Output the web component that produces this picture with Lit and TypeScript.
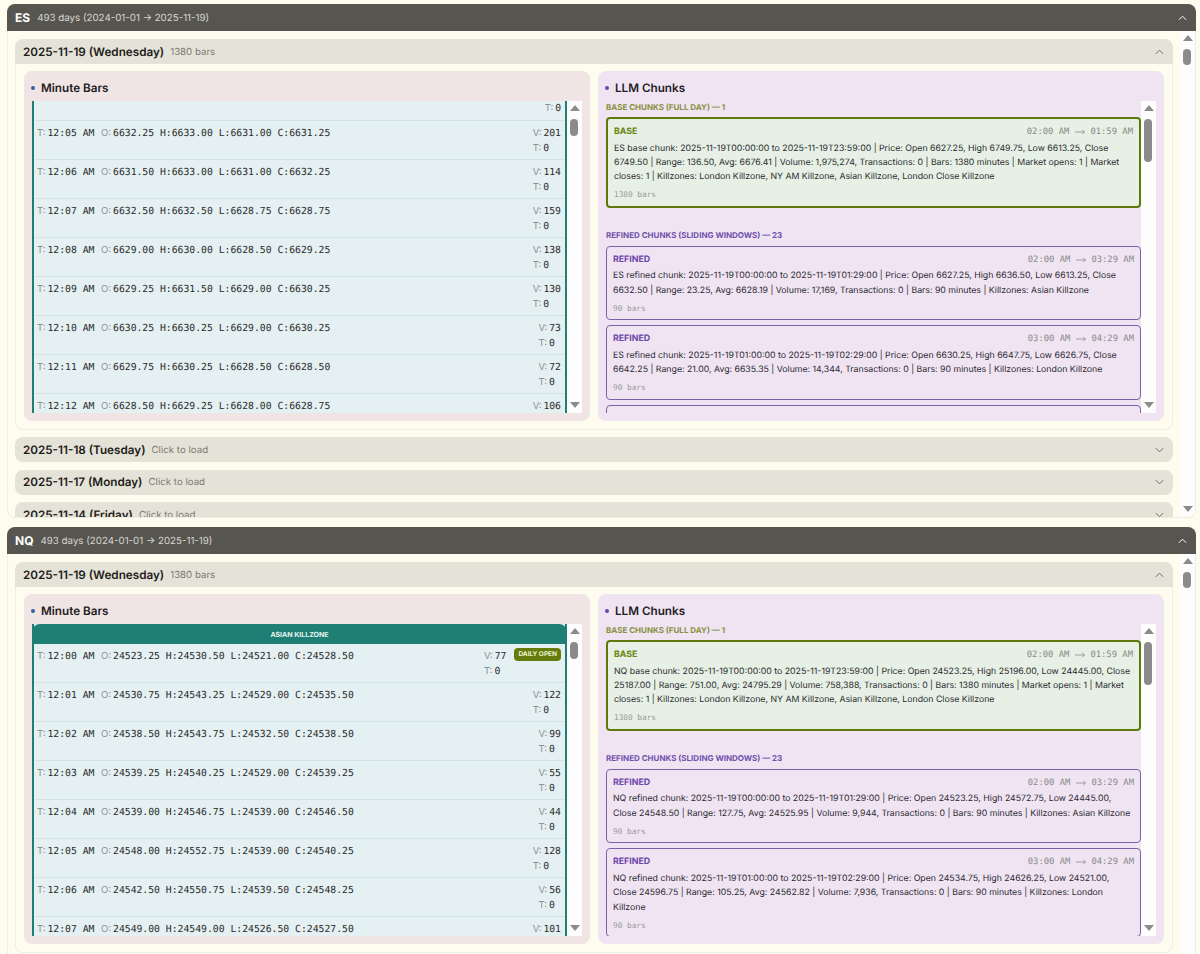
import { LitElement, html, css } from "lit";
import { customElement, property } from "lit/decorators.js";

type Bar = [string, string, string, string, string, string, string?];
const ES: Bar[] = [
  ["12:05 AM", "6632.25", "6633.00", "6631.00", "6631.25", "201"],
  ["12:06 AM", "6631.50", "6633.00", "6631.00", "6632.25", "114"],
  ["12:07 AM", "6632.50", "6632.50", "6628.75", "6628.75", "159"],
  ["12:08 AM", "6629.00", "6630.00", "6628.50", "6629.25", "138"],
  ["12:09 AM", "6629.25", "6631.50", "6629.00", "6630.25", "130"],
  ["12:10 AM", "6630.25", "6630.25", "6629.00", "6630.25", "73"],
  ["12:11 AM", "6629.75", "6630.25", "6628.50", "6628.50", "72"],
  ["12:12 AM", "6628.50", "6629.25", "6628.00", "6628.75", "106"],
];
const NQ: Bar[] = [
  ["12:00 AM", "24523.25", "24530.50", "24521.00", "24528.50", "77", "DAILY OPEN"],
  ["12:01 AM", "24530.75", "24543.25", "24529.00", "24535.50", "122"],
  ["12:02 AM", "24538.50", "24543.75", "24532.50", "24538.50", "99"],
  ["12:03 AM", "24539.25", "24540.25", "24529.00", "24539.25", "55"],
  ["12:04 AM", "24539.00", "24546.75", "24539.00", "24546.50", "44"],
  ["12:05 AM", "24548.00", "24552.75", "24539.00", "24540.25", "128"],
  ["12:06 AM", "24542.50", "24550.75", "24539.50", "24548.25", "56"],
  ["12:07 AM", "24549.00", "24549.00", "24526.50", "24527.50", "101"],
];

const KZ = "Killzones: London Killzone, NY AM Killzone, Asian Killzone, London Close Killzone";
interface Refined { from: string; to: string; text: string }
interface Sym {
  name: string; bars: Bar[]; killzone?: string; partial: boolean;
  base: string; refined: Refined[]; days: string[];
}
const SYMS: Sym[] = [
  {
    name: "ES", bars: ES, partial: true,
    base: `ES base chunk: 2025-11-19T00:00:00 to 2025-11-19T23:59:00 | Price: Open 6627.25, High 6749.75, Low 6613.25, Close 6749.50 | Range: 136.50, Avg: 6676.41 | Volume: 1,975,274, Transactions: 0 | Bars: 1380 minutes | Market opens: 1 | Market closes: 1 | ${KZ}`,
    refined: [
      { from: "02:00 AM", to: "03:29 AM", text: "ES refined chunk: 2025-11-19T00:00:00 to 2025-11-19T01:29:00 | Price: Open 6627.25, High 6636.50, Low 6613.25, Close 6632.50 | Range: 23.25, Avg: 6628.19 | Volume: 17,169, Transactions: 0 | Bars: 90 minutes | Killzones: Asian Killzone" },
      { from: "03:00 AM", to: "04:29 AM", text: "ES refined chunk: 2025-11-19T01:00:00 to 2025-11-19T02:29:00 | Price: Open 6630.25, High 6647.75, Low 6626.75, Close 6642.25 | Range: 21.00, Avg: 6635.35 | Volume: 14,344, Transactions: 0 | Bars: 90 minutes | Killzones: London Killzone" },
    ],
    days: ["2025-11-18 (Tuesday)", "2025-11-17 (Monday)", "2025-11-14 (Friday)"],
  },
  {
    name: "NQ", bars: NQ, killzone: "ASIAN KILLZONE", partial: false,
    base: `NQ base chunk: 2025-11-19T00:00:00 to 2025-11-19T23:59:00 | Price: Open 24523.25, High 25196.00, Low 24445.00, Close 25187.00 | Range: 751.00, Avg: 24795.29 | Volume: 758,388, Transactions: 0 | Bars: 1380 minutes | Market opens: 1 | Market closes: 1 | ${KZ}`,
    refined: [
      { from: "02:00 AM", to: "03:29 AM", text: "NQ refined chunk: 2025-11-19T00:00:00 to 2025-11-19T01:29:00 | Price: Open 24523.25, High 24572.75, Low 24445.00, Close 24548.50 | Range: 127.75, Avg: 24525.95 | Volume: 9,944, Transactions: 0 | Bars: 90 minutes | Killzones: Asian Killzone" },
      { from: "03:00 AM", to: "04:29 AM", text: "NQ refined chunk: 2025-11-19T01:00:00 to 2025-11-19T02:29:00 | Price: Open 24534.75, High 24626.25, Low 24521.00, Close 24596.75 | Range: 105.25, Avg: 24562.82 | Volume: 7,936, Transactions: 0 | Bars: 90 minutes | Killzones: London Killzone" },
    ],
    days: [],
  },
];

@customElement("fake-scrollbar")
class FakeScrollbar extends LitElement {
  @property({ type: Number }) thumbTop = 12;
  @property({ type: Number }) thumbHeight = 16;
  static styles = css`
    :host { display: flex; flex: none; width: 15px; background: #fdfdfd; flex-direction: column; align-items: center; position: relative; }
    .up, .down { width: 0; height: 0; border-left: 5px solid transparent; border-right: 5px solid transparent; position: absolute; left: 2.5px; }
    .up { top: 4px; border-bottom: 6px solid #8b8b8b; }
    .down { bottom: 5px; border-top: 6px solid #8b8b8b; }
    .thumb { position: absolute; left: 3px; width: 8px; border-radius: 4px; background: #8b8b8b; }
  `;
  render() {
    return html`<div class="up"></div>
      <div class="thumb" style="top:${this.thumbTop}px;height:${this.thumbHeight}px"></div>
      <div class="down"></div>`;
  }
}

const chevUp = html`<svg viewBox="0 0 10 6" width="9" height="6" fill="none" stroke="currentColor" stroke-width="1.1"><polyline points="1,5 5,1 9,5"></polyline></svg>`;
const chevDown = html`<svg viewBox="0 0 10 6" width="9" height="6" fill="none" stroke="currentColor" stroke-width="1.1"><polyline points="1,1 5,5 9,1"></polyline></svg>`;
const timeArrow = html`<svg class="tarrow" viewBox="0 0 10 6" width="10" height="6" fill="none" stroke="currentColor" stroke-width="0.8"><path d="M0 3H9.5M7.2 1L9.5 3L7.2 5"></path></svg>`;

@customElement("app-root")
export class AppRoot extends LitElement {
  static styles = css`
    :host { display: block; height: 954px; overflow: hidden; background: #fefcef; font-family: Inter, "Liberation Sans", sans-serif; text-rendering: geometricPrecision; }
    * { box-sizing: border-box; }
    .page { display: flex; flex-direction: column; gap: 9px; padding: 4px 4px 0 7px; }
    .section { flex: none; height: 514px; display: flex; flex-direction: column; }
    .sec-head { flex: none; height: 27px; background: #57554f; border-radius: 8px 8px 0 0; color: #fff; display: flex; align-items: center; padding: 0 9px 0 8px; }
    .sec-name { font-weight: 700; font-size: 12px; }
    .sec-sub { font-size: 9.75px; color: #d8d6cf; margin-left: 7px; flex: 1; padding-top: 1px; }
    .sec-body { flex: 1; min-height: 0; display: flex; border: 1px solid #f0eee2; border-top: 0; border-radius: 0 0 8px 8px; overflow: hidden; margin-right: 0; }
    .sec-scroll { flex: 1; min-width: 0; overflow: hidden; padding: 8px 7px 0 7px; display: flex; flex-direction: column; gap: 7.4px; }
    .day { flex: none; }
    .day-head { height: 25px; background: #e5e3d8; border-radius: 8px; display: flex; align-items: center; padding: 0 9px 0 8px; color: #6b6a62; }
    .day.open .day-head { border-radius: 8px 8px 0 0; }
    .day-title { font-size: 11.7px; font-weight: 600; color: #1d1c18; }
    .day-sub { font-size: 9.7px; color: #7d7c74; margin-left: 6px; flex: 1; padding-top: 1px; }
    .day-body { height: 366px; border: 1px solid #efede1; border-top: 0; border-radius: 0 0 8px 8px; padding: 7px 8px 0; display: grid; grid-template-columns: 1fr 1fr; gap: 8px; align-items: start; }
    .panel { height: 350px; border-radius: 8px; padding: 0 8px 8px; display: flex; flex-direction: column; }
    .panel.min { background: #f1e4e4; }
    .panel.llm { background: #f0e4f3; }
    .panel-title { flex: none; height: 30px; display: flex; align-items: center; gap: 5px; font-size: 11.7px; font-weight: 600; color: #1d1c22; padding-top: 3px; }
    .dot { width: 4px; height: 4px; border-radius: 50%; margin-left: -1px; margin-right: 1px; }
    .min .dot { background: #2f5fa8; }
    .llm .dot { background: #6b46a8; }
    .scroller { flex: 1; min-height: 0; display: flex; overflow: hidden; }
    .view { flex: 1; min-width: 0; overflow: hidden; }
    .bars { background: #e4f0f1; border-left: 2px solid #1f7f74; border-right: 2px solid #1f7f74; height: 100%; overflow: hidden; }
    .kz { height: 20px; background: #1f7f74; margin: 0 -2px; padding: 0 2px; border-radius: 8px 8px 0 0; color: #e8f4f0; font-size: 7px; font-weight: 700; display: flex; align-items: center; justify-content: center; }
    .bar { height: 39px; display: flex; align-items: flex-start; padding: 5px 4px 0 3px; border-bottom: 1px solid #d6e3e5; font-family: "DejaVu Sans Mono", monospace; font-size: 9.75px; color: #2a2a2a; line-height: 15px; }
    .bar.partial { height: 20px; padding-top: 0; justify-content: flex-end; }
    .lbl { font-family: Inter, "Liberation Sans", sans-serif; color: #8b9294; font-size: 9.5px; margin-right: 2px; }
    .ohlc { flex: 1; display: flex; white-space: pre; }
    .tcol { width: 64px; }
    .vt { display: flex; flex-direction: column; }
    .badge { margin-left: 8px; margin-top: -1.5px; height: 13px; padding: 0 4px; border-radius: 4px; background: #657b0c; color: #eef2d8; font: 700 6.5px/13px Inter, "Liberation Sans", sans-serif; white-space: nowrap; }
    .chunks { height: 100%; overflow: hidden; }
    .grp { font-size: 8px; font-weight: 700; text-transform: uppercase; height: 16px; display: flex; align-items: flex-start; line-height: 12px; }
    .grp.base { color: #86903f; }
    .grp.ref { color: #7150ac; margin-top: 21px; height: 17px; line-height: 12px; }
    .card { border-radius: 4px; padding: 7px 6px 5.5px; font-size: 8.75px; line-height: 14.4px; color: #2b2a30; }
    .card.base { background: #e6f0e4; border: 2px solid #5f7a0a; }
    .card.ref { background: #f0e4f3; border: 1px solid #7b63a8; margin-bottom: 5.4px; }
    .card.empty { height: 40px; margin-bottom: 0; }
    .chead { display: flex; justify-content: space-between; height: 12px; line-height: 12px; margin-bottom: 3.5px; }
    .ctag { font-weight: 700; font-size: 8.8px; }
    .base .ctag { color: #6c8412; }
    .ref .ctag { color: #6b46a8; }
    .ctime { font-family: "DejaVu Sans Mono", monospace; font-size: 8.85px; color: #8a8a8a; display: flex; align-items: center; }
    .tarrow { margin: 0 5.5px; flex: none; }
    .cmeta { font-family: "DejaVu Sans Mono", monospace; font-size: 7.75px; color: #9a9a9a; line-height: 11px; margin-top: 4.5px; }
  `;

  private bar(b: Bar) {
    return html`<div class="bar">
      <div class="ohlc"><span class="tcol"><span class="lbl">T:</span>${b[0]}</span><span><span class="lbl">O:</span>${b[1]} H:${b[2]} L:${b[3]} C:${b[4]}</span></div>
      <div class="vt"><span><span class="lbl">V:</span>${b[5]}</span><span><span class="lbl">T:</span>0</span></div>
      ${b[6] ? html`<span class="badge">${b[6]}</span>` : ""}
    </div>`;
  }

  private openDay(s: Sym) {
    return html`<div class="day open">
      <div class="day-head"><span class="day-title">2025-11-19 (Wednesday)</span><span class="day-sub">1380 bars</span>${chevUp}</div>
      <div class="day-body">
        <div class="panel min">
          <div class="panel-title"><span class="dot"></span>Minute Bars</div>
          <div class="scroller">
            <div class="view"><div class="bars">
              ${s.killzone ? html`<div class="kz">${s.killzone}</div>` : ""}
              ${s.partial ? html`<div class="bar partial"><div class="vt"><span><span class="lbl">T:</span>0</span></div></div>` : ""}
              ${s.bars.map((b) => this.bar(b))}
            </div></div>
            <fake-scrollbar .thumbTop=${18} .thumbHeight=${17}></fake-scrollbar>
          </div>
        </div>
        <div class="panel llm">
          <div class="panel-title"><span class="dot"></span>LLM Chunks</div>
          <div class="scroller">
            <div class="view"><div class="chunks">
              <div class="grp base">Base chunks (full day) — 1</div>
              <div class="card base">
                <div class="chead"><span class="ctag">BASE</span><span class="ctime">02:00 AM${timeArrow}01:59 AM</span></div>
                <div>${s.base}</div>
                <div class="cmeta">1380 bars</div>
              </div>
              <div class="grp ref">Refined chunks (sliding windows) — 23</div>
              ${s.refined.map((r) => html`<div class="card ref">
                <div class="chead"><span class="ctag">REFINED</span><span class="ctime">${r.from}${timeArrow}${r.to}</span></div>
                <div>${r.text}</div>
                <div class="cmeta">90 bars</div>
              </div>`)}
              <div class="card ref empty"></div>
            </div></div>
            <fake-scrollbar .thumbTop=${18} .thumbHeight=${43}></fake-scrollbar>
          </div>
        </div>
      </div>
    </div>`;
  }

  render() {
    return html`<div class="page">
      ${SYMS.map((s) => html`<div class="section">
        <div class="sec-head"><span class="sec-name">${s.name}</span><span class="sec-sub">493 days (2024-01-01 → 2025-11-19)</span>${chevUp}</div>
        <div class="sec-body">
          <div class="sec-scroll">
            ${this.openDay(s)}
            ${s.days.map((d) => html`<div class="day"><div class="day-head"><span class="day-title">${d}</span><span class="day-sub">Click to load</span>${chevDown}</div></div>`)}
          </div>
          <fake-scrollbar .thumbTop=${18} .thumbHeight=${16}></fake-scrollbar>
        </div>
      </div>`)}
    </div>`;
  }
}
